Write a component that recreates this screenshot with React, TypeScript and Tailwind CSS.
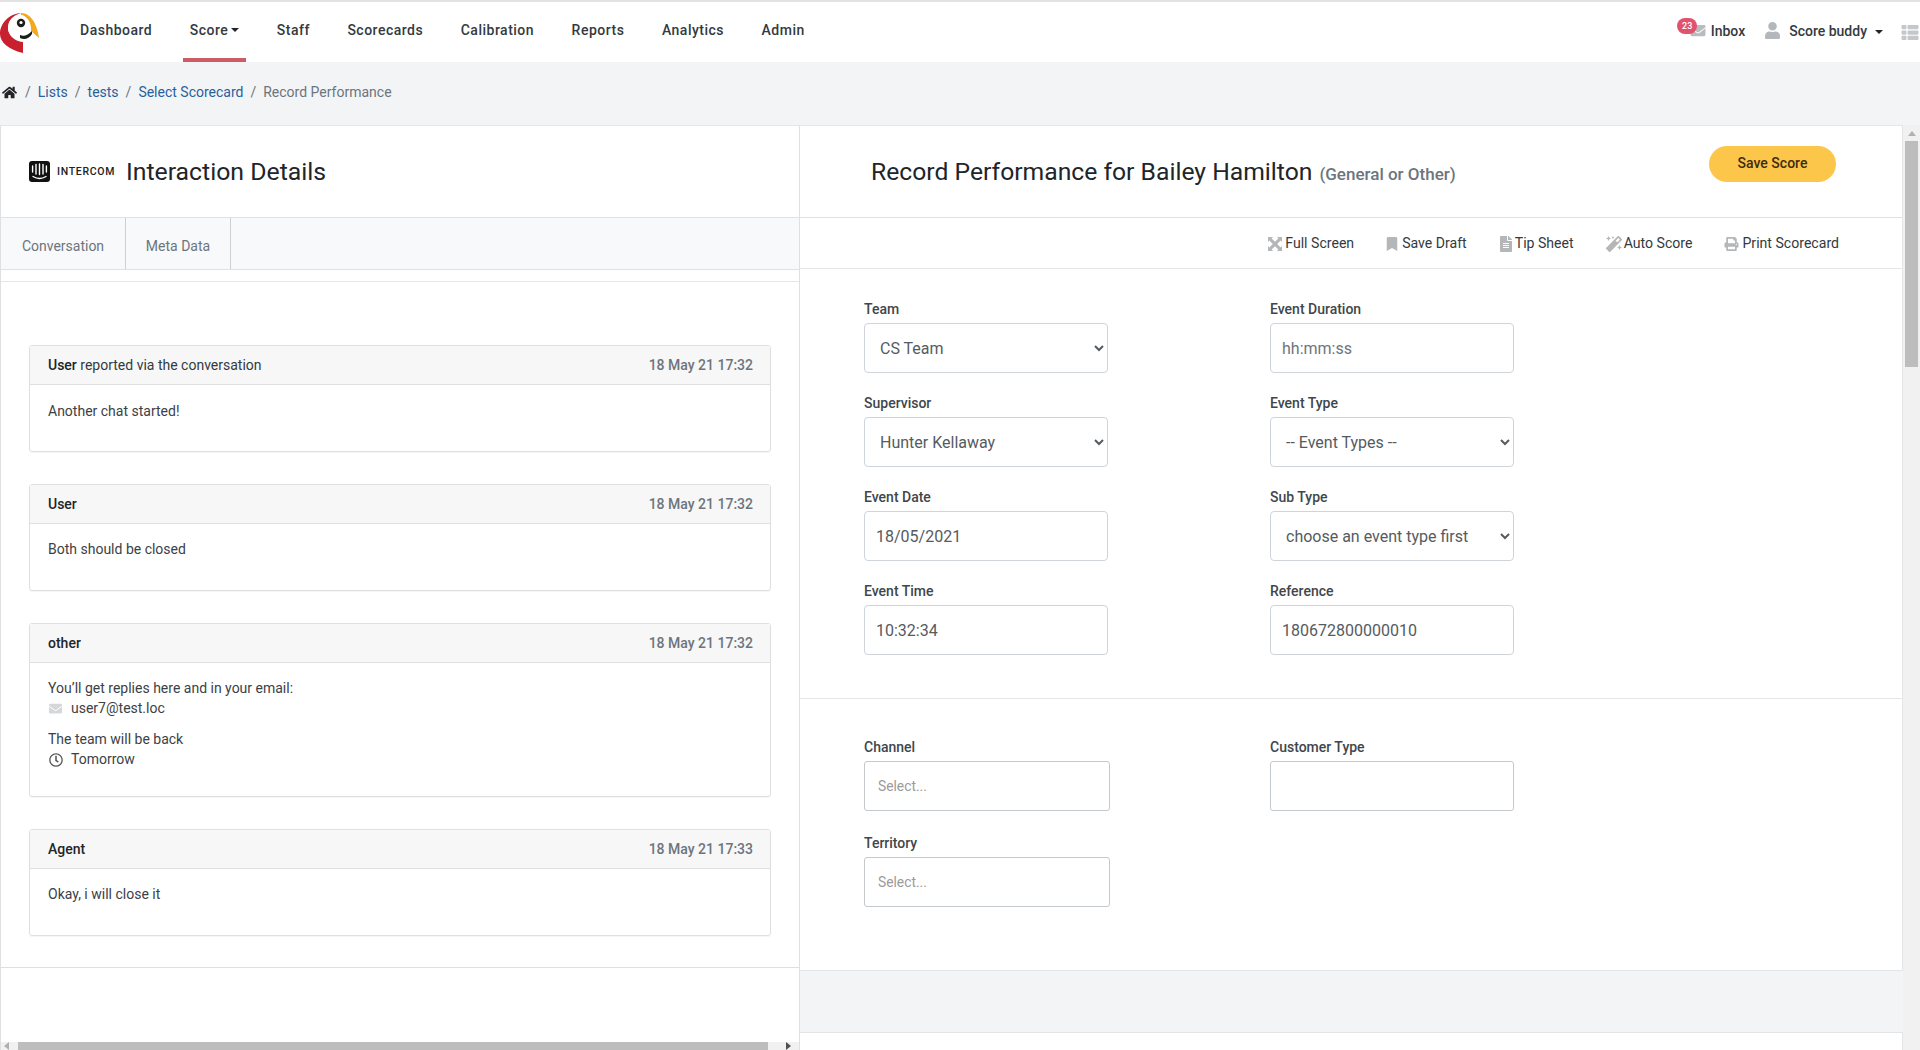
import React from "react";
import { FaHome, FaBookmark, FaFileAlt, FaMagic, FaPrint, FaUser, FaEnvelope, FaRegClock, FaThList } from "react-icons/fa";

const navItems = ["Dashboard", "Score", "Staff", "Scorecards", "Calibration", "Reports", "Analytics", "Admin"];

function Caret() {
  return <span className="inline-block w-0 h-0 border-x-[4px] border-x-transparent border-t-[4px] border-t-[#212529]" />;
}

function Logo() {
  return (
    <svg width="40" height="50" viewBox="0 0 40 50" className="shrink-0 mb-[3px]">
      <path d="M21 7C8 8 0 18 0 28C0 37 10 44 23 47L23 36C14 35 8 29 8 22C8 14 14 9 21 7Z" fill="#c9202f" />
      <path d="M21 7C31 7 37 18 39 32L31 25C31 16 27 10 21 9Z" fill="#f2a81f" />
      <path d="M21 9C27 10 31 16 31 25L20 30C12 30 8 28 8 22C8 14 14 9 21 9Z" fill="#fff" />
      <circle cx="21" cy="17" r="4.2" fill="#1d1d1d" />
      <circle cx="21" cy="16.5" r="1.6" fill="#fff" />
      <path d="M20 29C24 31 28 29 32 25L32 28C29 33 24 34 20 32Z" fill="#1d1d1d" />
    </svg>
  );
}

function IntercomLogo() {
  return (
    <svg width="21" height="21" viewBox="0 0 21 21" className="shrink-0">
      <rect width="21" height="21" rx="3" fill="#111" />
      <g stroke="#fff" strokeWidth="1.4" strokeLinecap="round">
        <path d="M3.6 5V11" />
        <path d="M7 3.5V13" />
        <path d="M10.5 3V13.5" />
        <path d="M14 3.5V13" />
        <path d="M17.4 5V11" />
      </g>
      <path d="M4 15.5C8 18 13 18 17 15.5" stroke="#fff" strokeWidth="1.4" fill="none" strokeLinecap="round" />
    </svg>
  );
}

function FullscreenIcon() {
  return (
    <svg width="14" height="14" viewBox="0 0 14 14" fill="#b4b6b8">
      <path d="M0 0H5L3.6 1.4L7 4.8L10.4 1.4L9 0H14V5L12.6 3.6L9.2 7L12.6 10.4L14 9V14H9L10.4 12.6L7 9.2L3.6 12.6L5 14H0V9L1.4 10.4L4.8 7L1.4 3.6L0 5Z" />
    </svg>
  );
}

function Tool({ icon, label, w }: { icon: React.ReactNode; label: string; w: string }) {
  return (
    <span className="flex items-center text-[14.1px] text-[#343a40]">
      <span className={`flex items-center ${w}`}>{icon}</span>
      {label}
    </span>
  );
}

function Field({ label, children }: { label: string; children: React.ReactNode }) {
  return (
    <div>
      <div className="text-[14px] leading-[20px] font-medium text-[#41464b] mb-[4px]">{label}</div>
      {children}
    </div>
  );
}

function NativeSelect({ value }: { value: string }) {
  return (
    <select defaultValue={value} className="block w-full h-[50px] bg-white border border-[#ced4da] rounded-[4px] pl-[11px] pr-[6px] text-[16px] text-[#555b61]">
      <option>{value}</option>
    </select>
  );
}

function TextBox({ value, placeholder }: { value?: string; placeholder?: string }) {
  return (
    <input
      readOnly
      defaultValue={value}
      placeholder={placeholder}
      className="block w-full h-[50px] bg-white border border-[#ced4da] rounded-[4px] px-[11px] text-[16px] text-[#555b61] placeholder:text-[#6c757d]"
    />
  );
}

function FakeSelect() {
  return (
    <div className="h-[50px] bg-white border border-[#c4c9ce] rounded-[3px] px-[13px] flex items-center text-[13.8px] text-[#9b9b9b]">Select...</div>
  );
}

function Message({ who, rest, time, children }: { who: string; rest?: string; time: string; children: React.ReactNode }) {
  return (
    <div className="border border-[#dfdfdf] rounded-[3px] shadow-[0_1px_1px_rgba(0,0,0,0.04)]">
      <div className="h-[39px] bg-[#f7f7f7] border-b border-[#dfdfdf] flex items-center justify-between pl-[18px] pr-[17px] text-[14px] text-[#343a40]">
        <span>
          <span className="font-medium text-[#212529]">{who}</span>
          {rest}
        </span>
        <span className="font-medium text-[#6c757d]">{time}</span>
      </div>
      <div className="px-[18px] py-[16px] text-[14px] leading-[19.5px] text-[#3c4146]">{children}</div>
    </div>
  );
}

export default function App() {
  return (
    <div className="w-[1920px] h-[1050px] overflow-hidden bg-[#f3f4f6] [font-family:Roboto,sans-serif] flex flex-col">
      {/* top navigation */}
      <nav className="h-[62px] shrink-0 bg-white border-t-2 border-t-[#e2e2e2] flex items-center">
        <Logo />
        <div className="flex items-stretch h-full gap-[23.5px] ml-[33px]">
          {navItems.map((n) => (
            <a
              key={n}
              className={`relative flex items-center gap-[3px] px-[7px] text-[14px] font-medium tracking-[0.5px] text-[#343a40] ${n === "Score" ? "border-b-4 border-b-[#cd5c66]" : "pb-[4px]"}`}
            >
              {n}
              {n === "Score" && <Caret />}
            </a>
          ))}
        </div>
        <div className="ml-auto flex items-center h-full">
          <span className="relative flex items-center w-[68px] justify-end text-[14px] font-medium text-[#343a40] mr-[20px] pb-[1px]">
            <FaEnvelope className="absolute left-[12px] top-[2px] text-[#b8bcbf] w-[18px] h-[15px]" />
            <span className="absolute left-0 top-[-3px] w-[20px] h-[16px] rounded-full bg-[#e1536d] text-white text-[9px] leading-[16px] text-center">23</span>
            Inbox
          </span>
          <FaUser className="text-[#b4b8bc] w-[15px] h-[21px] mr-[9px] mb-[3px]" />
          <span className="text-[14px] font-medium text-[#343a40] mr-[8px] pb-[1px]">Score buddy</span>
          <Caret />
          <FaThList className="text-[#c5c8cb] w-[20px] h-[17px] ml-[17px]" />
        </div>
      </nav>

      {/* breadcrumb */}
      <div className="h-[63px] shrink-0 flex items-center text-[14px] pl-[2px] pb-[2px]">
        <FaHome className="text-[#212529] w-[15px] h-[15px]" />
        <span className="text-[#6c757d] ml-[8px] mr-[7px]">/</span>
        <a className="text-[#2a5f9e]">Lists</a>
        <span className="text-[#6c757d] mx-[7px]">/</span>
        <a className="text-[#2a5f9e]">tests</a>
        <span className="text-[#6c757d] mx-[7px]">/</span>
        <a className="text-[#2a5f9e]">Select Scorecard</a>
        <span className="text-[#6c757d] mx-[7px]">/</span>
        <span className="text-[#6c757d]">Record Performance</span>
      </div>

      {/* body */}
      <div className="flex-1 flex min-h-0">
        {/* left panel */}
        <div className="w-[800px] shrink-0 flex flex-col bg-white border-t border-t-[#e4e6e8] border-l border-l-[#e0e0e0] border-r border-r-[#e0e0e0]">
          <div className="h-[92px] shrink-0 flex items-center pl-[28px] border-b border-b-[#dee2e6]">
            <IntercomLogo />
            <span className="ml-[7px] w-[69px] mt-[1px] text-[10.5px] font-medium tracking-[0.7px] text-[#222]">INTERCOM</span>
            <h3 className="text-[24.8px] text-[#212529] font-normal">Interaction Details</h3>
          </div>
          <div className="h-[52px] shrink-0 flex bg-[#f8f9fa] border-b border-b-[#dee2e6] text-[14px] text-[#6c757d]">
            <div className="w-[125px] flex items-center justify-center pt-[6px] border-r border-r-[#ccd0d4]">Conversation</div>
            <div className="w-[105px] flex items-center justify-center pt-[6px] border-r border-r-[#ccd0d4]">Meta Data</div>
          </div>
          <div className="h-[12px] shrink-0 border-b border-b-[#e4e6e8]" />
          <div className="flex-1 min-h-0 flex flex-col">
            <div className="h-[686px] shrink-0 border-b border-b-[#dfdfdf] pt-[63px] px-[28px] flex flex-col gap-[32px]">
              <Message who="User" rest=" reported via the conversation" time="18 May 21 17:32">
                <p className="mb-[13.5px] pt-[1px]">Another chat started!</p>
              </Message>
              <Message who="User" time="18 May 21 17:32">
                <p className="mb-[14.5px]">Both should be closed</p>
              </Message>
              <Message who="other" time="18 May 21 17:32">
                <p className="mb-[10px]">
                  You’ll get replies here and in your email:
                  <br />
                  <span className="inline-flex items-center">
                    <FaEnvelope className="text-[#d6d7d9] w-[15px] h-[13px] mr-[8px]" />
                    user7@test.loc
                  </span>
                </p>
                <p className="mb-[8px]">
                  The team will be back
                  <br />
                  <span className="inline-flex items-center">
                    <FaRegClock className="text-[#555] w-[14px] h-[14px] mr-[8px] ml-[1px]" />
                    Tomorrow
                  </span>
                </p>
              </Message>
              <Message who="Agent" time="18 May 21 17:33">
                <p className="mb-[14.5px]">Okay, i will close it</p>
              </Message>
            </div>
            <div className="flex-1" />
            <div className="h-[8px] shrink-0 bg-[#f1f1f1] flex items-center relative">
              <span className="w-0 h-0 ml-[3px] border-y-[4px] border-y-transparent border-r-[5px] border-r-[#b0b0b0]" />
              <div className="absolute left-[17px] w-[750px] h-full bg-[#bdbdbd]" />
              <span className="ml-auto mr-[8px] w-0 h-0 border-y-[4px] border-y-transparent border-l-[5px] border-l-[#505050]" />
            </div>
          </div>
        </div>

        {/* right panel */}
        <div className="flex-1 min-w-0 flex flex-col">
          <div className="h-[846px] shrink-0 bg-white border-t border-t-[#e4e6e8] border-b border-b-[#e2e4e6] border-r border-r-[#e4e6e8] flex flex-col">
            <div className="h-[92px] shrink-0 flex items-center pl-[71px] pr-[66px] border-b border-b-[#dee2e6]">
              <h3 className="text-[24.7px] text-[#212529] font-normal whitespace-nowrap">Record Performance for Bailey Hamilton</h3>
              <span className="ml-[7px] mt-[6px] text-[17px] font-medium text-[#6c757d]">(General or Other)</span>
              <button className="ml-auto mb-[16px] w-[127px] h-[36px] rounded-full bg-[#fcc64b] text-[14px] font-medium text-[#3f2c0e]">Save Score</button>
            </div>
            <div className="h-[51px] shrink-0 flex items-center justify-end pr-[63px] pt-[2px] gap-[32px] border-b border-b-[#e4e6e8]">
              <Tool icon={<FullscreenIcon />} label="Full Screen" w="w-[17px]" />
              <Tool icon={<FaBookmark className="text-[#b4b6b8] w-[12px] h-[14px]" />} label="Save Draft" w="w-[16px]" />
              <Tool icon={<FaFileAlt className="text-[#b4b6b8] w-[14px] h-[16px]" />} label="Tip Sheet" w="w-[16px]" />
              <Tool icon={<FaMagic className="text-[#b4b6b8] w-[16px] h-[16px]" />} label="Auto Score" w="w-[18px]" />
              <Tool icon={<FaPrint className="text-[#b4b6b8] w-[15px] h-[14px]" />} label="Print Scorecard" w="w-[18px]" />
            </div>
            <div className="h-[430px] shrink-0 pt-[30px] pl-[64px] border-b border-b-[#e4e6e8]">
              <div className="grid grid-cols-[244px_244px] gap-x-[162px] gap-y-[20px]">
                <Field label="Team"><NativeSelect value="CS Team" /></Field>
                <Field label="Event Duration"><TextBox placeholder="hh:mm:ss" /></Field>
                <Field label="Supervisor"><NativeSelect value="Hunter Kellaway" /></Field>
                <Field label="Event Type"><NativeSelect value="-- Event Types --" /></Field>
                <Field label="Event Date"><TextBox value="18/05/2021" /></Field>
                <Field label="Sub Type"><NativeSelect value="choose an event type first" /></Field>
                <Field label="Event Time"><TextBox value="10:32:34" /></Field>
                <Field label="Reference"><TextBox value="180672800000010" /></Field>
              </div>
            </div>
            <div className="pt-[38px] pl-[64px]">
              <div className="grid grid-cols-[246px_244px] gap-x-[160px] gap-y-[22px]">
                <Field label="Channel"><FakeSelect /></Field>
                <Field label="Customer Type"><div className="h-[50px] bg-white border border-[#c4c9ce] rounded-[3px]" /></Field>
                <Field label="Territory"><FakeSelect /></Field>
              </div>
            </div>
          </div>
          <div className="h-[61px] shrink-0" />
          <div className="flex-1 bg-white border-t border-t-[#e2e4e6] border-r border-r-[#e4e6e8]" />
        </div>

        {/* page scrollbar */}
        <div className="w-[17px] shrink-0 bg-[#f1f1f1] flex flex-col items-center">
          <span className="mt-[6px] w-0 h-0 border-x-[4px] border-x-transparent border-b-[5px] border-b-[#b0b0b0]" />
          <div className="mt-[5px] w-[13px] h-[226px] bg-[#bdbdbd]" />
        </div>
      </div>
    </div>
  );
}
